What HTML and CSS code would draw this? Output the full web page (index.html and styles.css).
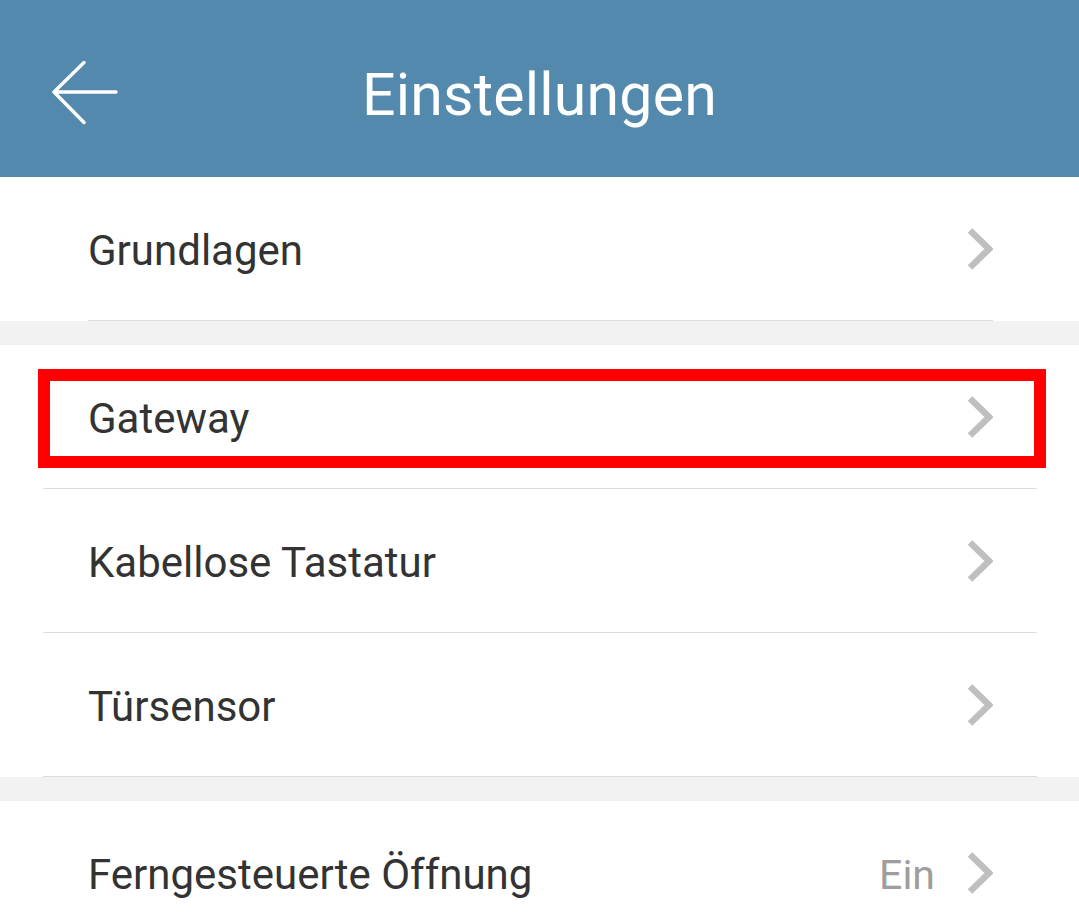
FILE: index.html
```
<!DOCTYPE html>
<html lang="de">
<head>
<meta charset="utf-8">
<title>Einstellungen</title>
<link rel="stylesheet" href="styles.css">
</head>
<body>
<header class="topbar">
  <svg class="back" width="66" height="64" viewBox="0 0 66 64" aria-hidden="true">
    <path d="M64 31 H2 M2 31 L32 1.5 M2 31 L32 61.5" fill="none" stroke="#fff" stroke-width="3.4" stroke-linecap="round" stroke-linejoin="round"/>
  </svg>
  <h1 class="title">Einstellungen</h1>
</header>
<main class="list">
  <section class="group">
    <div class="row row-inset">
      <span class="label">Grundlagen</span>
      <span class="right"><svg class="chev" width="26" height="42" viewBox="0 0 26 42"><path d="M3 2.5 L22 21 L3 39.5" fill="none" stroke="#bfbfbf" stroke-width="6.5"/></svg></span>
    </div>
  </section>
  <div class="gap"></div>
  <section class="group">
    <div class="row row-wide highlighted">
      <span class="label">Gateway</span>
      <span class="right"><svg class="chev" width="26" height="42" viewBox="0 0 26 42"><path d="M3 2.5 L22 21 L3 39.5" fill="none" stroke="#bfbfbf" stroke-width="6.5"/></svg></span>
      <div class="mark"></div>
    </div>
    <div class="row row-wide">
      <span class="label">Kabellose Tastatur</span>
      <span class="right"><svg class="chev" width="26" height="42" viewBox="0 0 26 42"><path d="M3 2.5 L22 21 L3 39.5" fill="none" stroke="#bfbfbf" stroke-width="6.5"/></svg></span>
    </div>
    <div class="row row-wide">
      <span class="label">Türsensor</span>
      <span class="right"><svg class="chev" width="26" height="42" viewBox="0 0 26 42"><path d="M3 2.5 L22 21 L3 39.5" fill="none" stroke="#bfbfbf" stroke-width="6.5"/></svg></span>
    </div>
  </section>
  <div class="gap"></div>
  <section class="group">
    <div class="row row-wide">
      <span class="label">Ferngesteuerte Öffnung</span>
      <span class="right"><span class="value">Ein</span><svg class="chev" width="26" height="42" viewBox="0 0 26 42"><path d="M3 2.5 L22 21 L3 39.5" fill="none" stroke="#bfbfbf" stroke-width="6.5"/></svg></span>
    </div>
  </section>
</main>
</body>
</html>
```
FILE: styles.css
```
html, body {
  margin: 0;
  padding: 0;
  background: #ffffff;
  font-family: Roboto, "Noto Sans", "Liberation Sans", sans-serif;
  overflow: hidden;
}

.topbar {
  position: relative;
  height: 177px;
  background: #5289ad;
  display: flex;
  align-items: center;
  justify-content: center;
}

.back {
  position: absolute;
  left: 52px;
  top: 61px;
}

.title {
  margin: 0;
  padding-top: 12px;
  color: #ffffff;
  font-weight: 400;
  font-size: 59px;
  letter-spacing: 0.2px;
}

.list {
  display: flex;
  flex-direction: column;
}

.group {
  background: #ffffff;
  display: flex;
  flex-direction: column;
}

.gap {
  height: 24px;
  background: #f2f2f2;
}

.row {
  position: relative;
  height: 143px;
  display: flex;
  align-items: center;
  justify-content: space-between;
  border-bottom: 1px solid #dcdcdc;
}

.row-inset {
  margin: 0 86px 0 88px;
}

.row-wide {
  margin: 0 42px 0 43px;
  padding: 0 44px 0 45px;
}

.group:last-child .row:last-child {
  border-bottom: none;
}

.label {
  font-size: 42px;
  color: #333333;
  padding-top: 4px;
}

.right {
  display: flex;
  align-items: center;
  gap: 32px;
}

.value {
  font-size: 41px;
  color: #9e9e9e;
  padding-top: 4px;
}

.chev {
  display: block;
}

.mark {
  position: absolute;
  left: -5px;
  top: 24px;
  width: 984px;
  height: 75px;
  border: 12px solid #ff0000;
}
```
